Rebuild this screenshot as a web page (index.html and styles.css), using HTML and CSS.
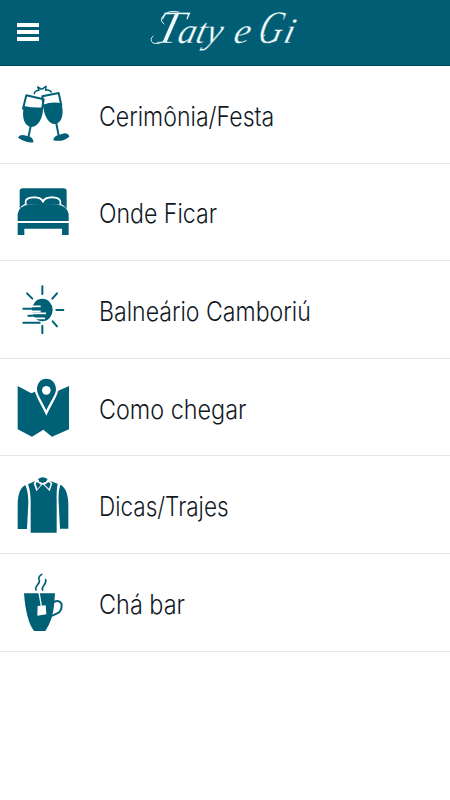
FILE: index.html
```html
<!DOCTYPE html>
<html lang="pt-BR">
<head>
<meta charset="utf-8">
<title>Taty e Gi</title>
<link rel="stylesheet" href="styles.css">
</head>
<body>
<header class="bar">
  <button class="menu" aria-label="Menu"><span></span><span></span><span></span></button>
  <svg class="title" viewBox="0 0 150 66">
    <g transform="translate(10 0) skewX(-14)">
    <text y="43" class="small"><tspan x="4" class="cap" textLength="28" lengthAdjust="spacingAndGlyphs">T</tspan><tspan x="28" textLength="44" lengthAdjust="spacingAndGlyphs">aty</tspan> <tspan x="84">e</tspan> <tspan x="108" class="cap" textLength="24" lengthAdjust="spacingAndGlyphs">G</tspan><tspan x="134">i</tspan></text>
    </g>
    <path class="swash" d="M17 40Q10 45 4 43Q0 40 4 36M15 24Q9 20 16 14Q21 10 30 12M126 39Q117 45 113 41Q111 38 116 35"/>
  </svg>
</header>
<main class="list">
  <a class="row">
    <svg class="icon" viewBox="0 -36 210 291">
      <path class="clink" d="M79 47Q80 40 86 38L93 37 89 27 99 33Q104 34 108 29L114 25 113 37Q124 34 130 42"/>
      <path class="line" d="M55 52L107 64 103 90M55 52L45 92M103 55L152 45 160 82M103 55L106 84M69 140L61 178M144 132L152 172"/>
      <path d="M48 84Q76 90 105 88C106 120 91 146 71 147C49 145 40 119 48 84Z"/>
      <path d="M105 80Q132 70 160 76C169 106 162 134 143 138C123 141 107 113 105 80Z"/>
      <path d="M30 179Q34 168 49 172L68 177Q76 182 77 193Q54 195 30 179ZM136 187Q137 176 149 172L169 166Q181 166 184 176Q164 193 136 187Z"/>
    </svg>
    <span class="label"><span class="w1">Cerimônia/Festa</span></span>
  </a>
  <a class="row">
    <svg class="icon" viewBox="0 -43 210 291">
      <path d="M44 33H167Q176 33 176 42V94Q168 84 158 80V70Q154 58 132 58Q110 58 105 67Q99 58 78 58Q54 58 51 70V80Q40 84 35 94V42Q35 33 44 33Z"/>
      <path class="pillow" d="M53 82V71Q58 60 78 60Q100 60 105 74Q110 60 132 60Q152 60 157 71V82"/>
      <path d="M29 131V110Q32 84 65 82Q105 78 146 82Q178 84 182 110V131ZM29 137H182V173H162V154H49V173H29Z"/>
    </svg>
    <span class="label"><span class="w2">Onde Ficar</span></span>
  </a>
  <a class="row">
    <svg class="icon" viewBox="0 -45 210 291">
      <ellipse cx="103" cy="102" rx="31" ry="34"/>
      <path class="white" d="M68 106H98M66 91H98M60 112H114M60 127H111"/>
      <path class="ray" d="M103 31V54M103 149V172M145 102H166M147 52L133 68M57 52L73 68M134 136L147 151M46 98H96M61 119H110M46 140H95"/>
    </svg>
    <span class="label"><span class="w3">Balneário Camboriú</span></span>
  </a>
  <a class="row">
    <svg class="icon" viewBox="0 -40 210 291">
      <path d="M29 41L70 63 86 56 144 58 183 41V171L132 193 106 172 72 193 29 171Z"/>
      <path class="halo" d="M115 19C98 19 87 33 87 51C87 66 101 84 115 114C129 84 144 66 144 51C144 33 132 19 115 19Z"/>
      <circle class="bag" cx="115" cy="54" r="13"/>
    </svg>
    <span class="label"><span class="w4">Como chegar</span></span>
  </a>
  <a class="row">
    <svg class="icon" viewBox="0 -42 210 291">
      <path d="M90 27Q104 17 119 27L114 35 104 39 94 35ZM82 33L77 40 85 64 99 48 104 43 110 48 125 64 133 40 126 33 149 41Q145 59 146 90V188H68V92Q67 61 60 43ZM52 45Q61 65 61 98L57 177H29V105Q29 57 52 45ZM157 44Q180 55 181 104V176H156L152 98Q150 64 157 44ZM86 36L93 40 99 44 88 57 83 41ZM123 36L128 41 123 56 110 44 116 40Z"/>
    </svg>
    <span class="label"><span class="w5">Dicas/Trajes</span></span>
  </a>
  <a class="row">
    <svg class="icon" viewBox="0 -42 210 291">
      <path d="M48 76H141L139 103Q136 154 112 189H78Q54 158 48 76Z"/>
      <path class="handle" d="M137 102Q153 94 160 106Q164 124 152 134L133 143"/>
      <path class="steam" d="M84 66C78 51 101 47 93 34Q90 27 101 19M104 66C97 56 117 51 113 35"/>
      <path class="string" d="M93 73Q96 89 100 114"/>
      <path class="bag" d="M89 114L113 112 115 139 88 143Z"/>
    </svg>
    <span class="label"><span class="w6">Chá bar</span></span>
  </a>
</main>
</body>
</html>
```
FILE: styles.css
```css
* { box-sizing: border-box; }
body {
  margin: 0;
  min-height: 800px;
  background: #fff;
  font-family: Inter, "Liberation Sans", sans-serif;
}
.bar {
  display: flex;
  align-items: center;
  height: 66px;
  background: #005d73;
  border-bottom: 1px solid #004b5f;
}
.menu {
  display: flex;
  flex-direction: column;
  gap: 3px;
  width: 22px;
  margin: 0 0 1px 17px;
  padding: 0;
  border: 0;
  background: none;
}
.menu span { height: 4px; background: #fff; }
.title {
  width: 150px;
  height: 66px;
  margin-left: 110px;
  overflow: visible;
  fill: #f2ffff;
  font-family: "Liberation Serif", serif;
  font-style: italic;
}
.small { font-size: 36px; stroke: #005d73; stroke-width: .3; }
.cap { font-size: 47px; stroke-width: .6; }
.swash { fill: none; stroke: #d5edf0; stroke-width: 1; stroke-linecap: round; }
.row {
  display: flex;
  align-items: center;
  height: 97.6px;
  border-bottom: 1px solid #e4e6e7;
}
.icon {
  width: 70px;
  height: 97px;
  margin-left: 8px;
  flex: none;
  fill: #006076;
}
.line, .clink, .ray, .handle, .steam, .white, .string, .pillow {
  fill: none;
  stroke: #006076;
  stroke-width: 6;
  stroke-linecap: round;
  stroke-linejoin: round;
}
.clink { stroke-width: 4.5; }
.white { stroke: #fff; stroke-width: 5; stroke-linecap: butt; }
.steam { stroke-width: 5; }
.string { stroke: #fff; stroke-width: 4; }
.pillow { fill: #006076; stroke: #fff; stroke-width: 5; }
.bag { fill: #fff; }
.halo { stroke: #fff; stroke-width: 14; paint-order: stroke; }
.label {
  margin: 3px 0 0 20.5px;
  color: #11191f;
  font-size: 26.5px;
  font-weight: 300;
  line-height: 32px;
  white-space: nowrap;
}
.label span { display: inline-block; transform-origin: 0 50%; transform: scaleX(.871); }
.label .w4 { transform: scaleX(.882); }
.label .w5 { transform: scaleX(.85); }
.label .w6 { transform: scaleX(.885); }
```
